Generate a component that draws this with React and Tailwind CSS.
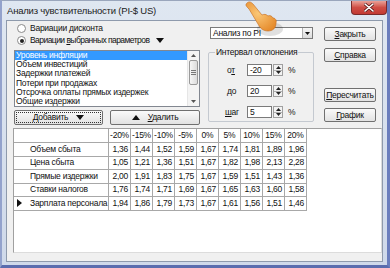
import React from 'react';

const cols = ['-20%', '-15%', '-10%', '-5%', '0%', '5%', '10%', '15%', '20%'];
const rows = [
  ['Объем сбыта', ['1,36', '1,44', '1,52', '1,59', '1,67', '1,74', '1,81', '1,89', '1,96']],
  ['Цена сбыта', ['1,05', '1,21', '1,36', '1,51', '1,67', '1,82', '1,98', '2,13', '2,28']],
  ['Прямые издержки', ['2,00', '1,91', '1,83', '1,75', '1,67', '1,59', '1,51', '1,43', '1,36']],
  ['Ставки налогов', ['1,76', '1,74', '1,71', '1,69', '1,67', '1,65', '1,63', '1,60', '1,58']],
  ['Зарплата персонала', ['1,94', '1,86', '1,79', '1,73', '1,67', '1,61', '1,56', '1,51', '1,46']],
];
const items = [
  'Уровень инфляции',
  'Объем инвестиций',
  'Задержки платежей',
  'Потери при продажах',
  'Отсрочка оплаты прямых издержек',
  'Общие издержки',
];

function Btn({ children, className = '' }) {
  return (
    <div className={`flex items-center justify-center border border-[#707070] rounded-[2px] bg-gradient-to-b from-[#fafafa] to-[#e2e2e2] whitespace-nowrap ${className}`}>
      {children}
    </div>
  );
}

function Radio({ checked }) {
  return (
    <div className="w-[9px] h-[9px] rounded-full border border-[#8a8a8a] bg-white flex items-center justify-center">
      {checked && <div className="w-[4px] h-[4px] rounded-full bg-[#222]" />}
    </div>
  );
}

function Spin() {
  return (
    <div className="w-[10px] h-[12px] flex flex-col border border-[#a0a0a0] bg-[#f2f2f2]">
      <div className="flex-1 flex items-center justify-center border-b border-[#b0b0b0]">
        <svg width="5" height="3"><path d="M0 3 L2.5 0 L5 3Z" fill="#222" /></svg>
      </div>
      <div className="flex-1 flex items-center justify-center">
        <svg width="5" height="3"><path d="M0 0 L2.5 3 L5 0Z" fill="#222" /></svg>
      </div>
    </div>
  );
}

function SpinRow({ label, value }) {
  return (
    <div className="flex items-center h-[12px] pl-[18px]">
      <div className="w-[20px]">{label}</div>
      <div className="w-[25px] h-[12px] border border-[#7a7a7a] bg-white pl-[2px] leading-[10px]">{value}</div>
      <div className="ml-[1px]"><Spin /></div>
      <div className="ml-[5px]">%</div>
    </div>
  );
}

export default function App() {
  return (
    <div className="w-[390px] h-[268px] relative overflow-hidden font-['Liberation_Sans',Arial,sans-serif] text-[8.5px] tracking-[-0.25px] text-[#111] bg-[#f0f0f0]">
      <div className="w-[390px] h-[268px] flex flex-col bg-gradient-to-b from-[#dfe7f1] to-[#cfd9ea] border-t border-t-[#9aa6bc] border-l-[2px] border-l-[#93a2cc] border-r-[3px] border-r-[#6a7dbd] border-b-[3px] border-b-[#5a6cae]">
        {/* title bar */}
        <div className="h-[19px] flex items-start">
          <div className="pl-[5px] pt-[4px] text-[9.5px] tracking-[-0.2px] text-[#1b1b1b] leading-[12px]">Анализ чувствительности (PI-$ US)</div>
          <div className="ml-auto w-[36px] h-[14px] rounded-b-[4px] border border-t-0 border-[#7a2a2a] bg-gradient-to-b from-[#e9a199] via-[#cf4d45] to-[#c23a33] flex items-center justify-center">
            <svg width="10" height="9" viewBox="0 0 10 9">
              <path d="M1 1 L9 8 M9 1 L1 8" stroke="#5a1a1a" strokeWidth="3" strokeLinecap="round" />
              <path d="M1 1 L9 8 M9 1 L1 8" stroke="#fff" strokeWidth="1.6" strokeLinecap="round" />
            </svg>
          </div>
        </div>

        {/* client area */}
        <div className="ml-[4px] mr-[4px] mb-[3px] flex-1 border border-[#8e9aac] bg-[#f0f0f0] flex flex-col">
          <div className="h-[107px] flex">
            {/* left column */}
            <div className="ml-[7px] w-[186px] pt-[2px] flex flex-col">
              <div className="h-[11px] flex items-center gap-[4px] pl-[3px]">
                <Radio />
                <span>Вариации <u>д</u>исконта</span>
              </div>
              <div className="h-[11px] mt-[1px] flex items-center gap-[4px] pl-[3px]">
                <Radio checked />
                <span className="tracking-[-0.55px]">Вариации <u>в</u>ыбранных параметров</span>
                <svg width="8" height="5" className="ml-[3px]"><path d="M0 0 L8 0 L4 5Z" fill="#111" /></svg>
              </div>
              <div className="mt-[4px] h-[57px] border border-[#828790] bg-white flex">
                <div className="flex-1 flex flex-col">
                  {items.map((t, i) => (
                    <div
                      key={t}
                      className={`h-[9.2px] leading-[9.2px] pl-[1px] whitespace-nowrap ${i === 0 ? 'bg-[#3399ff] text-white' : ''}`}
                    >
                      {t}
                    </div>
                  ))}
                </div>
                <div className="w-[12px] flex flex-col bg-[#f4f4f4] border-l border-[#e6e6e6]">
                  <div className="h-[9px] flex items-center justify-center">
                    <svg width="5" height="3"><path d="M0 3 L2.5 0 L5 3Z" fill="#555" /></svg>
                  </div>
                  <div className="h-[25px] mx-[1px] rounded-[2px] border border-[#9a9a9a] bg-gradient-to-r from-[#f6f6f6] to-[#dcdcdc] flex flex-col items-center justify-center gap-[1px]">
                    <div className="w-[5px] h-px bg-[#777]" />
                    <div className="w-[5px] h-px bg-[#777]" />
                    <div className="w-[5px] h-px bg-[#777]" />
                  </div>
                  <div className="flex-1" />
                  <div className="h-[9px] flex items-center justify-center">
                    <svg width="5" height="3"><path d="M0 0 L2.5 3 L5 0Z" fill="#555" /></svg>
                  </div>
                </div>
              </div>
              <div className="mt-[3px] h-[15px] flex gap-[7px]">
                <Btn className="w-[89px] h-[15px]">
                  <div className="w-[85px] h-[11px] border border-dotted border-[#333] flex items-center justify-center gap-[8px]">
                    <span><u>Д</u>обавить</span>
                    <svg width="8" height="5"><path d="M0 0 L8 0 L4 5Z" fill="#111" /></svg>
                  </div>
                </Btn>
                <Btn className="w-[90px] h-[15px] gap-[8px]">
                  <svg width="8" height="5"><path d="M0 5 L8 5 L4 0Z" fill="#111" /></svg>
                  <span><u>У</u>далить</span>
                </Btn>
              </div>
            </div>

            {/* middle column */}
            <div className="ml-[8px] w-[106px] flex flex-col">
              <div className="mt-[6px] ml-[2px] w-[103px] h-[12px] border border-[#7a7a7a] bg-white flex items-center">
                <div className="flex-1 pl-[2px]">Анализ по PI</div>
                <div className="w-[10px] h-[10px] bg-gradient-to-b from-[#f6f6f6] to-[#dcdcdc] border-l border-[#b0b0b0] flex items-center justify-center">
                  <svg width="5" height="3"><path d="M0 0 L5 0 L2.5 3Z" fill="#111" /></svg>
                </div>
              </div>
              <div className="relative mt-[13px] h-[70px] border border-[#c4c9d0] rounded-[2px] pt-[11px] flex flex-col gap-[9px]">
                <div className="absolute -top-[6px] left-[6px] bg-[#f0f0f0] px-[1px] leading-[11px] whitespace-nowrap">Интервал отклонения</div>
                <SpinRow label={<span>о<u>т</u></span>} value="-20" />
                <SpinRow label={<span><u>д</u>о</span>} value="20" />
                <SpinRow label={<span className="-ml-[2px]"><u>ш</u>аг</span>} value="5" />
              </div>
            </div>

            {/* right column */}
            <div className="ml-[10px] w-[52px] flex flex-col">
              <Btn className="mt-[6px] h-[14px]"><span><u>З</u>акрыть</span></Btn>
              <Btn className="mt-[7px] h-[14px]"><span><u>С</u>правка</span></Btn>
              <Btn className="mt-[26px] h-[14px]"><span><u>П</u>ересчитать</span></Btn>
              <Btn className="mt-[6px] h-[14px]"><span><u>Г</u>рафик</span></Btn>
            </div>
          </div>

          {/* grid */}
          <div className="ml-[6px] w-[369px] h-[125px] bg-white border border-t-[#a0a0a0] border-l-[#a0a0a0] border-r-[#dcdcdc] border-b-[#dcdcdc] flex flex-col">
            <div className="flex h-[14px]">
              <div className="w-[95px] border-r border-b border-[#a8a8a8]" />
              {cols.map(c => (
                <div key={c} className="w-[22px] border-r border-b border-[#a8a8a8] flex items-center justify-center">{c}</div>
              ))}
            </div>
            {rows.map(([name, vals], ri) => (
              <div key={name} className="flex h-[13.5px]">
                <div className="w-[95px] border-r border-b border-[#a8a8a8] flex items-center whitespace-nowrap">
                  <div className="w-[16px] shrink-0 pl-[3px] flex items-center">
                    {ri === rows.length - 1 && (
                      <svg width="5" height="8"><path d="M0 0 L5 4 L0 8Z" fill="#111" /></svg>
                    )}
                  </div>
                  <span>{name}</span>
                </div>
                {vals.map((v, i) => (
                  <div key={i} className="w-[22px] border-r border-b border-[#a8a8a8] flex items-center justify-end pr-[2px]">{v}</div>
                ))}
              </div>
            ))}
          </div>
        </div>
      </div>

      {/* mouse pointer over the dialog */}
      <svg className="absolute left-[240px] top-0" width="45" height="38" viewBox="0 0 45 38">
        <defs>
          <radialGradient id="hg" cx="0.4" cy="0.4" r="0.7">
            <stop offset="0" stopColor="#fbc777" />
            <stop offset="1" stopColor="#e58a2a" />
          </radialGradient>
        </defs>
        <ellipse cx="30" cy="29" rx="13" ry="7" fill="#000" opacity="0.12" />
        <path d="M7 3 C9 1 11 2 13 4 L22 15 C24 14 26 14 28 16 C30 15 32 16 33 18 C35 18 37 20 36 23 C36 28 33 31 28 31 C23 31 20 28 18 24 L9 9 C6 6 5 5 7 3Z" fill="url(#hg)" stroke="#c46a1c" strokeWidth="0.6" />
      </svg>
    </div>
  );
}
